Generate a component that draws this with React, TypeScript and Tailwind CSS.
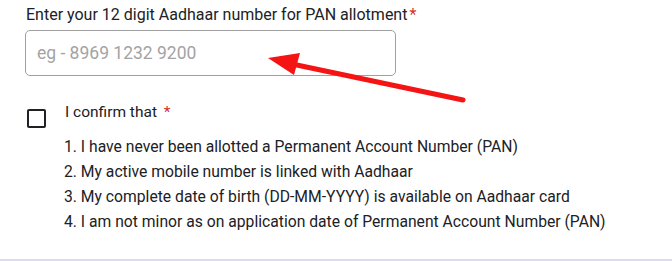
export default function App() {
  const items = [
    "I have never been allotted a Permanent Account Number (PAN)",
    "My active mobile number is linked with Aadhaar",
    "My complete date of birth (DD-MM-YYYY) is available on Aadhaar card",
    "I am not minor as on application date of Permanent Account Number (PAN)",
  ];

  return (
    <div className="relative w-[672px] h-[261px] bg-white font-['Roboto',sans-serif] text-[#202124] overflow-hidden">
      <div className="pl-[25px] pt-[5px]">
        <label className="block text-[16px] leading-[20px] pl-px">
          Enter your 12 digit Aadhaar number for PAN allotment
          <span className="text-[#d32f2f] ml-[2px]">*</span>
        </label>
        <div className="mt-[5px] w-[371px] h-[46px] border border-[#a0a0a0] rounded-[5px] flex items-center px-[11px]">
          <input
            className="w-full outline-none text-[17.5px] text-[#202124] placeholder:text-[#a3a3a3]"
            placeholder="eg - 8969 1232 9200"
          />
        </div>

        <div className="flex mt-[26px]">
          <div className="pt-[7px] w-[39px] shrink-0">
            <div className="ml-[2px] w-[19px] h-[19px] border-2 border-[#202124] rounded-[2px]" />
          </div>
          <div>
            <div className="text-[15.5px] leading-[20px] pl-px">
              I confirm that <span className="text-[#d32f2f] ml-[3px]">*</span>
            </div>
            <ol className="mt-[12px] text-[15.7px] leading-[25px]">
              {items.map((t, i) => (
                <li key={i}>
                  {i + 1}. {t}
                </li>
              ))}
            </ol>
          </div>
        </div>
      </div>

      <div className="absolute left-0 right-0 bottom-0 h-[2px] bg-[#dcdcec]" />

      {/* annotation arrow */}
      <svg className="absolute left-0 top-0 pointer-events-none" width="672" height="261">
        <line x1="463" y1="100" x2="292" y2="64" stroke="#f51414" strokeWidth="5" strokeLinecap="round" />
        <polygon points="268,58 300,53 294,75" fill="#f51414" />
      </svg>
    </div>
  );
}
